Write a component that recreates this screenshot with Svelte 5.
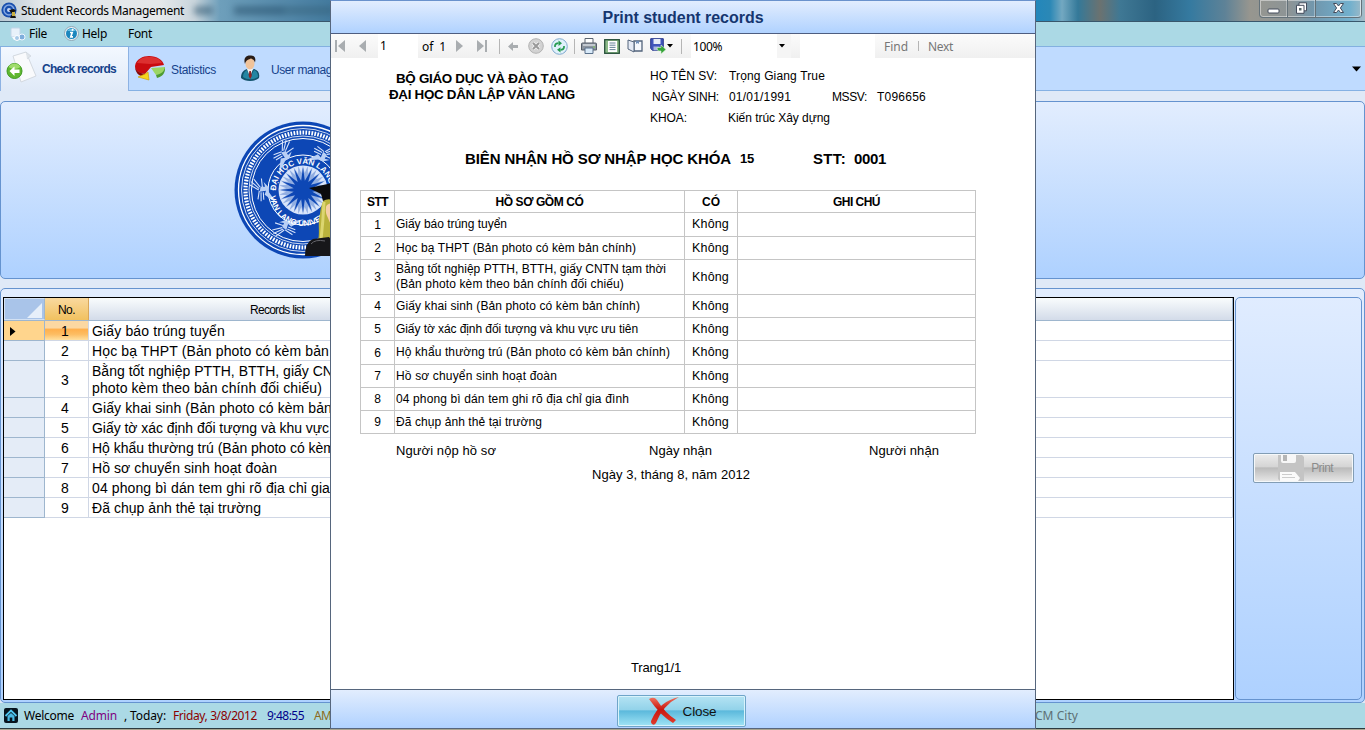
<script>
  // Spreads the letters so that the text takes the given width.
  function fit(node, width) {
    const natural = node.getBoundingClientRect().width;
    const count = [...node.textContent].length;
    node.style.letterSpacing = `${(width - natural) / count}px`;
  }

  const records = [
    { no: 1, lines: [['Giấy báo trúng tuyển', 133]], h: 20, current: true },
    { no: 2, lines: [['Học bạ THPT (Bản photo có kèm bản', 237]], h: 20 },
    { no: 3, lines: [['Bằng tốt nghiệp PTTH, BTTH, giấy CN', 241], ['photo kèm theo bản chính đối chiếu)', 230]], h: 37 },
    { no: 4, lines: [['Giấy khai sinh (Bản photo có kèm bản', 240]], h: 20 },
    { no: 5, lines: [['Giấy tờ xác định đối tượng và khu vực', 237]], h: 20 },
    { no: 6, lines: [['Hộ khẩu thường trú (Bản photo có kèm', 243]], h: 20 },
    { no: 7, lines: [['Hồ sơ chuyển sinh hoạt đoàn', 185]], h: 20 },
    { no: 8, lines: [['04 phong bì dán tem ghi rõ địa chỉ gia', 238]], h: 20 },
    { no: 9, lines: [['Đã chụp ảnh thẻ tại trường', 169]], h: 20 }
  ];

  const receipt = [
    { h: 24, lines: [['Giấy báo trúng tuyển', 111]] },
    { h: 23, lines: [['Học bạ THPT (Bản photo có kèm bản chính)', 240]] },
    { h: 35, lines: [['Bằng tốt nghiệp PTTH, BTTH, giấy CNTN tạm thời', 270], ['(Bản photo kèm theo bản chính đối chiếu)', 228]] },
    { h: 23, lines: [['Giấy khai sinh (Bản photo có kèm bản chính)', 244]] },
    { h: 23, lines: [['Giấy tờ xác định đối tượng và khu vực ưu tiên', 242]] },
    { h: 24, lines: [['Hộ khẩu thường trú (Bản photo có kèm bản chính)', 274]] },
    { h: 23, lines: [['Hồ sơ chuyển sinh hoạt đoàn', 161]] },
    { h: 23, lines: [['04 phong bì dán tem ghi rõ địa chỉ gia đình', 233]] },
    { h: 23, lines: [['Đã chụp ảnh thẻ tại trường', 146]] }
  ];

  function star(points, outer, inner) {
    return Array.from({ length: points * 2 }, (_, i) => {
      const r = i % 2 ? inner : outer;
      const a = (Math.PI * i) / points;
      return `${(r * Math.sin(a)).toFixed(2)},${(-r * Math.cos(a)).toFixed(2)}`;
    }).join(' ');
  }
  const birds = [27, -31, -93, -158];
</script>

<div class="window">
  <header class="titlebar">
    <svg class="appicon" width="16" height="17" viewBox="0 0 16 17">
      <circle cx="8" cy="8" r="7.6" fill="#194fae" /><circle cx="8" cy="8" r="5" fill="none" stroke="#86a9e2" stroke-width="1.5" />
      <circle cx="8" cy="8" r="2" fill="#c4d5f5" /><path d="M8 8l5-1 2 2-2 1 2 6H9l2-4z" fill="#111" /><path d="M11 10h3v4h-3z" fill="#c9b042" />
    </svg>
    <span use:fit={163}>Student Records Management</span>
    <div class="ghost"></div>
    <div class="winbuttons">
      <i><svg width="13" height="12"><rect x="1" y="7" width="11" height="4" rx="1" fill="#fff" stroke="#444c5c" /></svg></i>
      <i><svg width="13" height="12"><path d="M4 .8h7.5v8H9v2.5H1.5v-8H4z" fill="#fff" stroke="#444c5c" /><path d="M4 3.3h5v5.5" fill="none" stroke="#444c5c" /><rect x="4" y="6" width="2.5" height="2.5" fill="#566" /></svg></i>
      <i><svg width="13" height="12"><path d="M1.5 1.5h3l2 2.5 2-2.5h3L8.4 6l3.1 4.5h-3L6.500 8l-2 2.500h-3L4.600 6z" fill="#fff" stroke="#444c5c" /></svg></i>
    </div>
  </header>

  <nav class="menu">
    <svg width="16" height="16" viewBox="0 0 16 16"><rect x="1" y="2" width="9" height="9" rx="1" fill="#e8f1fa" stroke="#c2d5e8" /><path d="M2 11h12v3H4z" fill="#f7fbff" /><circle cx="12" cy="11" r="3" fill="#7eaedc" stroke="#eef6ff" /><circle cx="7" cy="12" r="2.500" fill="#a7c9e8" stroke="#fff" /></svg>
    <span class="m1" use:fit={18}>File</span>
    <svg width="15" height="15" viewBox="0 0 15 15"><circle cx="7.500" cy="7.500" r="7" fill="#eef4f8" stroke="#8fa6b4" /><circle cx="7.500" cy="7.500" r="5.500" fill="#1c86bd" /><path d="M3 5a5.500 5.500 0 0 1 9 0z" fill="#66bfe4" /><path d="M8.800 2.800l-.5 2M6 6.500h2.200l-1.400 4.300h2.200" fill="none" stroke="#fff" stroke-width="1.700" /></svg>
    <span class="m2" use:fit={25}>Help</span>
    <span use:fit={24}>Font</span>
  </nav>

  <div class="tabs">
    <div class="tab active">
      <svg width="32" height="34" viewBox="0 0 32 34"><path d="M7 5L20 1l10 24-15 6z" fill="#f9fafc" stroke="#d3d9e0" /><path d="M20 1l5 4-4 3" fill="#dfe4e9" stroke="#cbd2da" stroke-width=".6" /><circle cx="8.500" cy="20" r="7.500" fill="#5fb72f" stroke="#3f9a20" /><path d="M2.500 16a7 7 0 0 1 12 0q-6 4-12 0z" fill="#9fdc6c" /><path d="M3.500 20l5-4.500v3h5v3.400h-5v3z" fill="#fff" /></svg>
      <b use:fit={74}>Check records</b>
    </div>
    <div class="tab stats">
      <svg width="32" height="27" viewBox="0 0 32 27"><path d="M1 11C2 4 9 1 15 1c8 0 14 4 15 9l-13 2-6 7C4 18 1 15 1 11z" fill="#c90c10" /><path d="M3 8C6 2 12 2 16 2c6 0 10 2 12 6l-12 1z" fill="#dc3030" /><path d="M1 11c0 4 4 7 10 8v3C4 21 1 17 1 11z" fill="#86090a" /><path d="M17 13l14-1c0 5-4 8-9 8z" fill="#9bd665" /><path d="M22 20c5-1 8-3 9-8v3c-1 5-4 7-8 8z" fill="#4e9c31" /><path d="M11 19l3-2 1 8-11-3z" fill="#f6d51f" stroke="#cfa20c" stroke-width=".7" /></svg>
      <span use:fit={45}>Statistics</span>
    </div>
    <div class="tab user">
      <svg width="20" height="27" viewBox="0 0 20 27"><path d="M1 23c0-6 3-8 6-9l3 2 4-2c4 1 6 4 5 9-4 4-14 4-18 0z" fill="#12536d" /><path d="M3 22c0-4 2-6 4-7l3 8 4-8c3 1 4 4 4 7-4 3-11 3-15 0z" fill="#2486a3" /><path d="M7 14h6l-3 8z" fill="#f5f5f5" /><path d="M9.300 16h1.600l.9 5-1.600 3-1.500-3z" fill="#902424" /><ellipse cx="10" cy="8.500" rx="4.500" ry="6" fill="#f0c39a" /><path d="M5 9C3 2 7 0 11 .5c4 0 5 3 4 7-1-3-2-3-4-4-2 1-5 1-6 5.500z" fill="#281c17" /></svg>
      <span use:fit={61}>User manag</span>
    </div>
    <svg class="more" width="9" height="6"><path d="M0 .5h9L4.500 5.500z" /></svg>
  </div>

  <section class="banner">
    <svg width="140" height="140" viewBox="-70 -70 140 140">
      <circle r="68.500" fill="#0d47b5" />
      <g fill="none" stroke="#fff">
        <circle r="64.500" stroke-width="1.300" /><circle r="61.500" stroke-width=".8" />
        <circle r="57.500" stroke-width="4.200" stroke-dasharray="1.700 1.300" />
        <circle r="54" stroke-width=".8" /><circle r="51.500" stroke-width="1" />
        <circle r="35" stroke-width="1" />
      </g>
      {#each birds as angle}
        <g transform="rotate({angle}) translate(0 -42) rotate(-24)" fill="#b9cff5">
          <path d="M-17 9L-4 2l3 3 2-6 4 3-2 4 5 1-7 2-4-2z" />
          <path d="M-8-1L-1 2M-8-4l8 4M-5-6l7 5" stroke="#d5e2fa" stroke-width="1.100" />
          <path d="M3-1l9-6M4 0l10-4M5 1.500l10-2M4 3.500l8 3" stroke="#d5e2fa" stroke-width="1.100" />
        </g>
      {/each}
      <circle r="24.500" fill="#d8e5fb" />
      <polygon points={star(32, 24.500, 17)} fill="#0d47b5" opacity=".35" />
      <polygon points={star(16, 22.500, 9.500)} fill="#0d47b5" />
      <path id="ringTop" d="M-25.500 10.500A27.200 27.200 0 1 1 25.500 10.500" fill="none" />
      <path id="ringBottom" d="M-33 3A33 33 0 0 0 33 3" fill="none" />
      <text class="ring"><textPath href="#ringTop" startOffset="10" textLength="78">ĐẠI HỌC VĂN LANG</textPath></text>
      <text class="ring"><textPath href="#ringBottom" startOffset="3" textLength="92">VAN LANG UNIVERSITY</textPath></text>
      <path d="M14 54C18 44 14 34 17 24q2-18 10-18h14v50z" fill="#b9b23c" />
      <path d="M21 12q-1 20-3 38" stroke="#dcd670" stroke-width="3" fill="none" />
      <path d="M23 17q1-5 16-5v26q-12-1-14-10-3-5-2-11z" fill="#f6cfa6" />
      <path d="M2 66q0-14 8-17l16-2 14 19z" fill="#17171a" /><path d="M8 54q4-5 14-3" stroke="#66666c" fill="none" />
      <path d="M6-2l28-6v20q-8-5-14-1l-2-7z" fill="#0b0b0d" />
    </svg>
  </section>

  <section class="lower">
    <div class="grid">
      <div class="ghead">
        <div class="corner"><svg width="15" height="15"><path d="M15 0v15H0z" fill="#e6effa" /></svg></div>
        <div class="nohead"><span use:fit={17}>No.</span></div>
        <div class="listhead"><span use:fit={54}>Records list</span></div>
      </div>
      {#each records as row}
        <div class="grow" class:current={row.current} style="height:{row.h}px">
          <div class="rh">{#if row.current}<svg width="6" height="9"><path d="M0 0l5.500 4.500L0 9z" /></svg>{/if}</div>
          <div class="no">{row.no}</div>
          <div class="rec">{#each row.lines as [text, width]}<p><span use:fit={width}>{text}</span></p>{/each}</div>
        </div>
      {/each}
    </div>
    <aside>
      <button class="print">
        <svg width="28" height="28" viewBox="0 0 28 28"><path d="M1 1h24l2 2v24H3l-2-2z" fill="#c4c4c4" /><path d="M4 0h15v7q0 2-2 2H6q-2 0-2-2z" fill="#f7f7f7" /><rect x="6" y="1" width="4" height="6" fill="#b5b5b5" /><path d="M3 18h15l5 6-2 3H3z" fill="#fafafa" /><path d="M5 20.500h10M5 23.500h13" stroke="#ccc" /></svg>
        <span use:fit={22}>Print</span>
      </button>
    </aside>
  </section>

  <footer class="status">
    <svg width="14" height="15" viewBox="0 0 14 15"><rect width="14" height="15" rx="2" fill="#07141d" /><path d="M1.500 8L7 2.500 12.500 8" stroke="#4fc5ee" stroke-width="1.800" fill="none" /><path d="M3.500 8L7 5l3.500 3v5H8.300V9.500H5.700V13H3.500z" fill="#49b8e2" /></svg>
    <span class="welcome" use:fit={50}>Welcome</span>
    <span class="admin" use:fit={36}>Admin</span>
    <span class="today" use:fit={42}>, Today:</span>
    <span class="date" use:fit={84}>Friday, 3/8/2012</span>
    <span class="time" use:fit={37}>9:48:55</span>
    <span class="am" use:fit={17}>AM</span>
    <span class="city" use:fit={43}>CM City</span>
  </footer>
  <div class="edge"></div>
</div>

<div class="dialog">
  <h1><span use:fit={161}>Print student records</span></h1>
  <div class="tools">
    <svg class="t-first" width="12" height="12"><path d="M1 0h2v12H1zM11 0v12L4 6z" /></svg>
    <svg class="t-prev" width="8" height="12"><path d="M7 0v12L0 6z" /></svg>
    <div class="page">1</div>
    <span class="of" use:fit={24}>of&nbsp; 1</span>
    <svg class="t-next" width="8" height="12"><path d="M0 0v12l7-6z" /></svg>
    <svg class="t-last" width="12" height="12"><path d="M0 0v12l7-6zM8 0h2v12H8z" /></svg>
    <i class="sep s1"></i>
    <svg class="t-back" width="10" height="9"><path d="M0 4.500L5 0v3h5v3H5v3z" /></svg>
    <svg class="t-stop" width="16" height="16" viewBox="0 0 16 16"><circle cx="8" cy="8" r="7.300" fill="#d2d2d2" stroke="#b3b3b3" /><path d="M5 5l6 6m0-6l-6 6" stroke="#f4f4f4" stroke-width="3.600" /><path d="M5 5l6 6m0-6l-6 6" stroke="#999" stroke-width="2" /></svg>
    <svg class="t-ref" width="17" height="17" viewBox="0 0 17 17"><circle cx="8.500" cy="8.500" r="7.800" fill="#e0f1fb" stroke="#80aace" /><path d="M4 9V7.500q.5-2.300 3.500-2.300M13 8v1.500q-.5 2.300-3.500 2.300" fill="none" stroke="#269b50" stroke-width="1.700" /><path d="M7.500 2.500l3.500 2.700-3.500 2.700zM9.500 9.200L6 11.800l3.500 2.700z" fill="#269b50" /></svg>
    <i class="sep s2"></i>
    <svg class="t-print" width="16" height="16" viewBox="0 0 16 16"><path d="M4 .5h8V6H4z" fill="#fff" stroke="#5b6470" /><path d="M1.500 5h13q1 0 1 1v6H.5V6q0-1 1-1z" fill="#8d959f" stroke="#555d68" /><path d="M2 7h12" stroke="#d6dbe1" stroke-width="1.500" /><path d="M4 10h8v5.500H4z" fill="#d9eaf9" stroke="#5a718b" /><circle cx="13" cy="9" r=".8" fill="#79d54c" /></svg>
    <svg class="t-layout" width="16" height="15" viewBox="0 0 16 15"><rect x=".7" y=".7" width="14.600" height="13.600" fill="#8cba88" stroke="#264f39" stroke-width="1.300" /><rect x="4" y="2" width="9" height="11" fill="#fff" /><path d="M5.500 4h6M5.500 6.200h6M5.500 8.400h6M5.500 10.600h6" stroke="#658398" /></svg>
    <svg class="t-setup" width="16" height="14" viewBox="0 0 16 14"><path d="M7 2h8v10H7z" fill="#f5f8fd" stroke="#53647c" stroke-width="1.300" /><path d="M1 1l6 2v10l-6-3z" fill="#e4eaf5" stroke="#53647c" /><path d="M9 2v3l1.500-1L12 5V2z" fill="#6f8eb8" /></svg>
    <svg class="t-save" width="16" height="16" viewBox="0 0 16 16"><path d="M.7.700h12.600v11.600H2.500L.7 10.500z" fill="#4055bb" stroke="#28388d" /><path d="M3.500 1h7v5h-7z" fill="#e6ecf8" /><path d="M3.500 8.500h6v3.800h-6z" fill="#a7b7e0" /><path d="M7 9.500h4V7l5 4.500-5 4.500v-3H9q-2 0-2-3.500z" fill="#37a43b" stroke="#dff1dc" stroke-width=".6" /></svg>
    <svg class="t-arrow" width="6" height="4"><path class="k" d="M0 0h6L3 3.500z" /></svg>
    <i class="sep s3"></i>
    <div class="zoom"><span use:fit={29}>100%</span><em><svg width="6" height="4"><path class="k" d="M0 0h6L3 3.500z" /></svg></em></div>
    <div class="search"></div>
    <span class="find" use:fit={24}>Find</span><i class="bar"></i><span class="find" use:fit={25}>Next</span>
  </div>

  <div class="report">
    <div class="top">
      <div class="school">
        <p><span use:fit={172}>BỘ GIÁO DỤC VÀ ĐÀO TẠO</span></p>
        <p><span use:fit={186}>ĐẠI HỌC DÂN LẬP VĂN LANG</span></p>
      </div>
      <div class="info">
        <p><label><span use:fit={67}>HỌ TÊN SV:</span></label><span use:fit={96}>Trọng Giang True</span></p>
        <p><label class="in"><span use:fit={67}>NGÀY SINH:</span></label><span use:fit={62}>01/01/1991</span><span class="ms" use:fit={35}>MSSV:</span><span class="id" use:fit={49}>T096656</span></p>
        <p><label class="kh"><span use:fit={37}>KHOA:</span></label><span use:fit={102}>Kiến trúc Xây dựng</span></p>
      </div>
    </div>
    <h2><span use:fit={266}>BIÊN NHẬN HỒ SƠ NHẬP HỌC KHÓA</span><span class="k15" use:fit={14}>15</span><span class="stt" use:fit={33}>STT:</span><span class="num" use:fit={32}>0001</span></h2>

    <div class="table">
      <div class="tr th" style="height:22px"><div><span use:fit={21}>STT</span></div><div><span use:fit={88}>HỒ SƠ GỒM CÓ</span></div><div>CÓ</div><div><span use:fit={47}>GHI CHÚ</span></div></div>
      {#each receipt as row, i}
        <div class="tr" style="height:{row.h}px">
          <div>{i + 1}</div>
          <div class="item">{#each row.lines as [text, width]}<p><span use:fit={width}>{text}</span></p>{/each}</div>
          <div class="has"><span use:fit={37}>Không</span></div>
          <div></div>
        </div>
      {/each}
    </div>

    <div class="sign"><span use:fit={100}>Người nộp hồ sơ</span><span class="s-date" use:fit={63}>Ngày nhận</span><span class="s-rec" use:fit={70}>Người nhận</span></div>
    <p class="day"><span use:fit={158}>Ngày 3, tháng 8, năm 2012</span></p>
    <p class="pageno"><span use:fit={50}>Trang1/1</span></p>
  </div>

  <div class="dfoot">
    <button class="close">
      <svg width="32" height="30" viewBox="0 0 32 30"><defs><linearGradient id="rx" x1="0" y1="0" x2="0" y2="1"><stop offset="0" stop-color="#f0705c" /><stop offset=".45" stop-color="#c9170f" /><stop offset="1" stop-color="#e03a2a" /></linearGradient></defs><path d="M1 3Q6 0 9 4q8 13 19 20l-3 3Q13 20 1 3z" fill="url(#rx)" /><path d="M31 1Q15 9 8 27q-2 3-4 1-2-2 0-5Q12 5 31 1z" fill="url(#rx)" /></svg>
      <span use:fit={34}>Close</span>
    </button>
  </div>
</div>

<style>
  :global(body) { margin: 0; overflow: hidden; }
  * { box-sizing: border-box; }
  p, h1, h2 { margin: 0; }
  span { white-space: nowrap; display: inline-block; }
  svg { display: block; flex: none; }
  button { font: inherit; }
  .window { width: 1365px; height: 730px; display: flex; flex-direction: column; overflow: hidden; background: #dfe9f7; font-family: "Liberation Sans", sans-serif; }
  .titlebar { height: 22px; flex: none; display: flex; align-items: center; border-bottom: 1px solid #39576c; font: 12px "Noto Sans", sans-serif; color: #000;
    background: linear-gradient(90deg, #b9c9d4 0, #e2e7ea 40px, #e5e8ea 160px, #c9d5dc 195px, #6e9fbb 220px, #447b9f 330px, #2387bb 1036px, #2b88b6 1050px, #73a8c1 1062px, #347999 1078px, #6b7270 1100px, #3f7894 1120px, #2c6382 1155px, #357aa0 1190px, #5e8297 1225px, #97968f 1250px, #8c9496 1290px, #7097ae 1315px, #72b0cd 1350px, #a6bcc6 1365px); }
  .appicon { margin: 0 4px 0 1px; }
  .ghost { width: 140px; height: 9px; margin-left: 10px; filter: blur(3px); opacity: .5; background: linear-gradient(90deg, #234b66 0 18px, transparent 20px 38px, #234b66 42px 88px, #35617a 92px 136px); }
  .winbuttons { margin-left: auto; margin-right: 3px; align-self: flex-start; display: flex; width: 103px; height: 18px; border: 1px solid #64727a; border-top: 0; border-radius: 0 0 4px 4px; box-shadow: inset 0 0 0 1px #ffffff70; }
  .winbuttons i { width: 28px; display: flex; align-items: center; justify-content: center; border-right: 1px solid #64727a; box-shadow: inset -1px 0 #ffffff50; padding-bottom: 1px; }
  .winbuttons i:last-child { flex: 1; border: 0; }
  .menu { height: 25px; flex: none; display: flex; align-items: center; padding: 0 0 1px 10px; background: #abd9e5; border-bottom: 1px solid #83b0e0; font: 12px "Noto Sans", sans-serif; }
  .m1 { margin: 0 17px 0 3px; }
  .m2 { margin: 0 21px 0 3px; }
  .tabs { height: 44px; flex: none; display: flex; align-items: center; background: #bfdbff; border-bottom: 1px solid #85b1e3; font-size: 12px; color: #15428b; }
  .tab { display: flex; align-items: center; }
  .active { width: 129px; height: 44px; margin-bottom: -1px; padding: 0 0 0 5px; background: linear-gradient(#f3f8ff, #dfe9f7); border: 1px solid #8db2e3; border-width: 0 1px 0 1px; gap: 4px; }
  .active svg { margin-bottom: 2px; }
  .stats { margin-left: 5px; gap: 5px; }
  .user { margin-left: 24px; gap: 11px; }
  .stats span, .user span { margin-top: 2px; }
  .more { margin: 0 4px 0 auto; }
  .banner { height: 178px; margin-top: 10px; flex: none; border: 1px solid #6593cf; border-radius: 5px; background: linear-gradient(#e2edfe, #aed1ff); padding: 18px 0 0 232px; overflow: hidden; }
  .ring { font: bold 8px "Liberation Sans", sans-serif; fill: #fff; }
  .lower { height: 415px; margin-top: 9px; flex: none; border: 1px solid #6593cf; border-radius: 5px; background: linear-gradient(#e2edfe, #aed1ff); padding: 8px 2px 2px 2px; display: flex; }
  .grid { width: 1233px; height: 403px; border: 1px solid #000; background: #fff; overflow: hidden; }
  .ghead { display: flex; height: 23px; font-size: 12px; border-bottom: 1px solid #9eb6ce; line-height: 25px; }
  .corner { width: 41px; background: #a9c4e9; border: 1px solid #d3e1f3; border-right-color: #9eb6ce; padding: 4px 2px; display: flex; justify-content: flex-end; }
  .nohead { width: 44px; text-align: center; background: linear-gradient(#f9d99f, #f1c15f); border-right: 1px solid #d9a75b; }
  .listhead { flex: 1; padding-left: 161px; background: linear-gradient(#f9fcfd, #d3dbe9); border-right: 1px solid #9eb6ce; }
  .grow { display: flex; font-size: 14px; }
  .grow > div { border-bottom: 1px solid #d0d7e5; border-right: 1px solid #d0d7e5; }
  .grow > .rh { width: 41px; background: #e4ecf7; border-color: #9eb6ce; padding: 6px; }
  .no { width: 44px; display: flex; align-items: center; justify-content: center; padding-right: 3px; padding-top: 1px; }
  .rec { flex: 1; padding-left: 3px; padding-top: 2px; display: flex; flex-direction: column; justify-content: center; }
  .rec p { line-height: 17px; height: 17px; }
  .current > .rh { background: #ffd58d; }
  .current > .no { background: linear-gradient(#fcd8a2 0 35%, #ffb04d 45%, #fdbd63 70%, #ffe0a0); }
  aside { width: 127px; height: 403px; margin-left: 1px; border: 1px solid #6593cf; border-radius: 5px; background: linear-gradient(#e0ecff, #aed1ff); padding: 155px 0 0 17px; }
  .print { width: 101px; height: 30px; border: 1px solid #829db5; border-radius: 2px; box-shadow: inset 0 0 0 1px #f5f8fa; background: linear-gradient(#ececec, #d5d5d5 45%, #bbb 50%, #e8e8e8); color: #8b8b8b; font-size: 12px; display: flex; align-items: center; gap: 6px; padding: 0 0 0 23px; }
  .status { height: 25px; flex: none; display: flex; align-items: center; background: #abd9e5; padding: 0 0 0 4px; font: 12px "Noto Sans", sans-serif; }
  .welcome { margin-left: 6px; }
  .admin { margin-left: 7px; color: #800080; }
  .today { margin-left: 7px; }
  .date { margin-left: 7px; color: #8b0000; }
  .time { margin-left: 10px; color: #00008b; }
  .am { margin-left: 10px; color: #8b6b20; }
  .city { margin-left: 704px; color: #5d6f74; }
  .edge { height: 2px; flex: none; background: linear-gradient(#2c3b40 50%, #a8a58f 50%); }

  .dialog { position: absolute; left: 330px; top: 0; width: 706px; height: 729px; border: 1px solid #56667d; border-top-color: #6a92cc; background: #fff; font-family: "Liberation Sans", sans-serif; display: flex; flex-direction: column; color: #000; }
  h1 { height: 33px; flex: none; background: linear-gradient(#e2edfe, #b0d2ff); border-bottom: 1px solid #4e5d80; font-size: 16px; line-height: 33px; text-align: center; color: #15366f; }
  .tools { height: 24px; flex: none; display: flex; align-items: center; background: linear-gradient(#fbfbfb, #f0f0f0); font: 12px "Noto Sans", sans-serif; padding-left: 3px; }
  .tools svg { fill: #a9adb0; }
  .tools .k { fill: #000; }
  .t-prev { margin-left: 13px; }
  .page { background: #fff; width: 40px; height: 24px; line-height: 24px; margin-left: 11px; padding-left: 2px; font-size: 12px; }
  .of { margin-left: 4px; }
  .t-next { margin-left: 10px; }
  .t-last { margin-left: 13px; }
  .sep { width: 1px; height: 15px; background: #b5b5b5; }
  .s1 { margin-left: 10px; }
  .t-back { margin-left: 8px; }
  .t-stop { margin-left: 10px; }
  .t-ref { margin-left: 7px; }
  .s2 { margin-left: 6px; }
  .t-print { margin-left: 6px; }
  .t-layout { margin-left: 7px; }
  .t-setup { margin-left: 7px; }
  .t-save { margin-left: 7px; }
  .t-arrow { margin-left: 1px; }
  .s3 { margin-left: 8px; }
  .zoom { display: flex; align-items: center; background: #fff; margin-left: 9px; width: 100px; height: 24px; padding-left: 2px; }
  .zoom em { margin-left: auto; background: #f5f5f5; width: 14px; height: 24px; display: flex; align-items: center; padding-left: 2px; }
  .search { width: 75px; height: 24px; background: #fff; margin: 0 9px; }
  .find { color: #777; }
  .bar { width: 1px; height: 10px; background: #b5b5b5; margin: 0 9px 0 10px; }
  .report { flex: 1; font-size: 12px; padding: 7px 0 0 29px; }
  .top { display: flex; height: 64px; }
  .school { width: 242px; text-align: center; font-size: 13.400px; font-weight: bold; padding: 6px 0 0 2px; }
  .school p { height: 16px; line-height: 16px; }
  .info { margin-left: 48px; }
  .info p { height: 21px; line-height: 22px; display: flex; }
  label { width: 79px; }
  .in { padding-left: 2px; }
  .kh { width: 78px; }
  .ms { margin-left: 41px; }
  .id { margin-left: 10px; }
  h2 { font-size: 15px; line-height: 20px; height: 20px; margin: 20px 0 21px 105px; display: flex; }
  .k15 { margin-left: 9px; font-size: 13px; }
  .stt { margin-left: 59px; }
  .num { margin-left: 8px; }
  .table { width: 616px; border: 1px solid #c5c5c5; border-width: 1px 0 0 1px; }
  .tr { display: grid; grid-template-columns: 34px 290px 53px 238px; }
  .tr > div { border: 1px solid #c5c5c5; border-width: 0 1px 1px 0; display: flex; align-items: center; justify-content: center; }
  .tr > .item { flex-direction: column; align-items: flex-start; padding-left: 1px; }
  .tr > .has { font-size: 12.500px; padding-right: 1px; padding-bottom: 1px; }
  .item p { line-height: 15px; height: 15px; }
  .th { font-weight: bold; }
  .sign { height: 24px; line-height: 24px; margin-top: 5px; padding-left: 36px; display: flex; font-size: 13px; }
  .s-date { margin-left: 153px; }
  .s-rec { margin-left: 157px; }
  .day { height: 24px; line-height: 24px; padding-left: 232px; font-size: 13px; }
  .pageno { margin-top: 169px; line-height: 24px; padding-left: 271px; font-size: 13px; }
  .dfoot { height: 39px; flex: none; border-top: 1px solid #56667d; background: linear-gradient(#e2edfe, #b0d2ff); display: flex; justify-content: center; padding-top: 5px; padding-right: 4px; }
  .close { width: 129px; height: 32px; border: 1px solid #6fa5c9; border-radius: 2px; box-shadow: inset 0 0 0 1px #d8f3fb; background: linear-gradient(#b5e3f3, #93d3ea 45%, #5cb9dc 50%, #a0e4f5); display: flex; align-items: center; gap: 3px; padding: 0 0 0 30px; font-size: 13.500px; color: #111; }
</style>
